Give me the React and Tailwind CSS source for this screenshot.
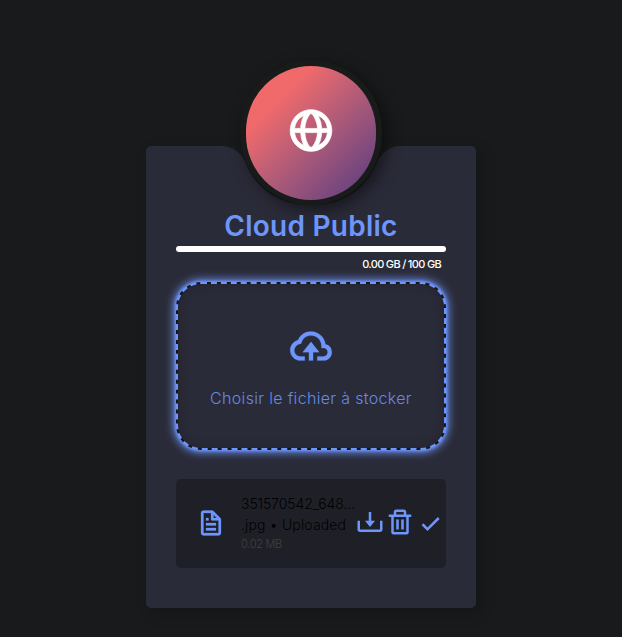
import { BiGlobe, BiCloudUpload, BiFile, BiDownload, BiTrash, BiCheck } from "react-icons/bi";

function Badge() {
  return (
    <div className="absolute left-1/2 top-[-86px] h-[146px] w-[190px] -translate-x-1/2">
      <svg className="absolute inset-0" width="190" height="146" viewBox="0 0 190 146">
        <path d="M0 86 H5 C17 86 26 93 30 104 C42 132 66 145 95 145 C124 145 148 132 160 104 C165 93 173 86 185 86 H190 V85 H0 Z" fill="#191a1b" />
      </svg>
      <div className="absolute left-[24px] top-0 h-[145px] w-[142px] rounded-full bg-[#191b1b] shadow-[5px_5px_15px_rgba(0,0,0,0.5)]" />
      <div className="absolute left-[30px] top-[6px] flex h-[134px] w-[130px] items-center justify-center rounded-full bg-linear-135 from-[#f06a6b] from-25% to-[#67417e] to-90% text-white">
        <BiGlobe size={50} stroke="white" strokeWidth="0.35" className="-translate-y-[2.5px]" />
      </div>
    </div>
  );
}

function FileRow() {
  return (
    <div className="mt-[29px] flex h-[89px] items-center rounded-[5px] bg-[#1f2027] pl-5 text-[#6d95fa]">
      <BiFile size={30} stroke="currentColor" strokeWidth="0.2" className="shrink-0 -translate-y-[1px]" />
      <div className="-mt-[2px] ml-[15px] w-[114px] shrink-0 text-black">
        <p className="whitespace-nowrap text-[14px] font-light leading-[21px] tracking-[-0.1px]">351570542_648...</p>
        <p className="whitespace-nowrap text-[14px] font-light leading-[21px] tracking-[0.15px]">.jpg • Uploaded</p>
        <p className="translate-y-[1px] text-[11px] font-light leading-[17px] tracking-[-0.3px] text-[#404040]">0.02 MB</p>
      </div>
      <div className="flex -translate-y-[2px] items-center text-[#6d95fa]">
        <BiDownload size={30} className="shrink-0" />
        <BiTrash size={30} className="shrink-0" />
        <BiCheck size={30} className="shrink-0 translate-y-[1px]" />
      </div>
    </div>
  );
}

export default function App() {
  return (
    <main className="h-[637px] w-[622px] overflow-hidden bg-[#191a1b] pt-[146px] font-['Inter','Noto_Sans',sans-serif]">
      <section className="relative mx-auto h-[462px] w-[330px] rounded-[5px] bg-[#2a2b38] px-[30px] pt-[60px] shadow-[5px_5px_15px_rgba(0,0,0,0.2)]">
        <Badge />
        <h1 className="relative whitespace-nowrap text-center text-[28px] font-semibold leading-[40px] tracking-[0.25px] text-[#6d95fa]">Cloud Public</h1>
        <div className="h-[6px] rounded-full bg-white" />
        <p className="pr-[5px] pt-[4px] text-right text-[11px] font-medium leading-[17px] tracking-[-0.67px] text-white">0.00 GB / 100 GB</p>
        <button className="mt-[9px] flex h-[168px] w-full flex-col items-center rounded-[25px] border-2 border-dashed border-[#6d95fa] [background:linear-gradient(#2a2b38,#2a2b38)_padding-box,#15161a_border-box] pt-[37px] text-[#6d95fa] shadow-[0_0_10px_2px_#6d95fa,0_0_3px_1px_#6d95fa,inset_0_0_12px_rgba(0,0,0,0.2)]">
          <BiCloudUpload size={50} stroke="currentColor" strokeWidth="0.1" />
          <span className="mt-[15px] whitespace-nowrap text-[16px] font-light leading-[24px] tracking-[0.33px] opacity-90">Choisir le fichier à stocker</span>
        </button>
        <FileRow />
      </section>
    </main>
  );
}
